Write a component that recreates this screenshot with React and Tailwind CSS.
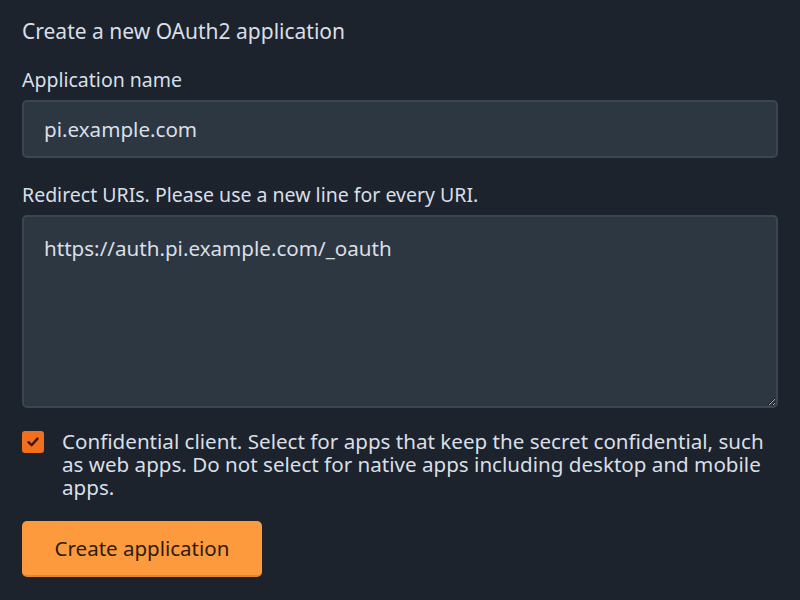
import React from 'react';

const App = () => {
  return (
    <div className="min-h-screen w-full bg-[#1c232d] px-[22px] pt-[16px] text-[#d9dfe6]" style={{ fontFamily: '"Noto Sans", "Open Sans", sans-serif' }}>
      <h2 className="text-[21px] leading-[30px]">Create a new OAuth2 application</h2>

      <label className="mt-[21px] block text-[19.5px] leading-[26px]">Application name</label>
      <input
        type="text"
        defaultValue="pi.example.com"
        className="mt-[7px] block h-[58px] w-full rounded-[5px] border-2 border-[#3b4652] bg-[#2d3742] px-[20px] text-[20.6px] text-[#d9dfe6] outline-none"
      />

      <label className="mt-[24px] block text-[19.5px] leading-[26px]">Redirect URIs. Please use a new line for every URI.</label>
      <textarea
        defaultValue="https://auth.pi.example.com/_oauth"
        className="mt-[7px] block h-[193px] w-full rounded-[5px] border-2 border-[#3b4652] bg-[#2d3742] px-[20px] pt-[17px] text-[20.6px] leading-[28px] text-[#d9dfe6] outline-none"
      />

      <div className="mt-[22px] flex items-start gap-[18px]">
        <span className="mt-[1px] flex h-[22px] w-[22px] shrink-0 items-center justify-center rounded-[3px] bg-[#f0701e]">
          <svg width="14" height="14" viewBox="0 0 14 14" fill="none">
            <path d="M2.5 7.2 L5.6 10.2 L11.5 3.6" stroke="#4a1006" strokeWidth="2.4" strokeLinecap="round" strokeLinejoin="round" />
          </svg>
        </span>
        <p className="text-[20.6px] leading-[23px]">
          Confidential client. Select for apps that keep the secret confidential, such as web apps. Do not select for native apps including desktop and mobile apps.
        </p>
      </div>

      <button className="mt-[22px] flex h-[56px] w-[240px] items-center justify-center rounded-[5px] border-b-2 border-[#e7852c] bg-[#fd9a3e] text-[20.5px] text-[#2a1d12]">
        Create application
      </button>
    </div>
  );
};

export default App;
